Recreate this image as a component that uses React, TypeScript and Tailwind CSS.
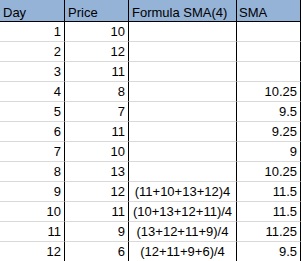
import React from 'react';

interface Row {
    day: number;
    price: number;
    formula?: string;
    sma?: string;
}

const ROWS: Row[] = [
    { day: 1, price: 10 },
    { day: 2, price: 12 },
    { day: 3, price: 11 },
    { day: 4, price: 8, sma: '10.25' },
    { day: 5, price: 7, sma: '9.5' },
    { day: 6, price: 11, sma: '9.25' },
    { day: 7, price: 10, sma: '9' },
    { day: 8, price: 13, sma: '10.25' },
    { day: 9, price: 12, formula: '(11+10+13+12)4', sma: '11.5' },
    { day: 10, price: 11, formula: '(10+13+12+11)/4', sma: '11.5' },
    { day: 11, price: 9, formula: '(13+12+11+9)/4', sma: '11.25' },
    { day: 12, price: 6, formula: '(12+11+9+6)/4', sma: '9.5' },
];

const GRID = 'grid grid-cols-[65px_64px_108px_64px]';

const App: React.FC = () => {
    return (
        <div className="w-[302px] h-[261px] overflow-hidden bg-white text-black text-[13px] font-['Liberation_Sans',Arial,sans-serif]">
            <div className={`${GRID} h-[22px] bg-[#95b3d7] border-b border-black leading-[17px] w-[301px]`}>
                <div className="pt-[4px] px-[3px] border-r border-black">Day</div>
                <div className="pt-[4px] px-[3px] border-r border-black">Price</div>
                <div className="pt-[4px] px-[3px] border-r border-black whitespace-nowrap">Formula SMA(4)</div>
                <div className="pt-[4px] px-[2px] border-r border-black">SMA</div>
            </div>
            {ROWS.map(r => (
                <div key={r.day} className={`${GRID} h-[20px] leading-[19px]`}>
                    <div className="px-[3px] text-right border-r border-b border-r-black border-b-[#d9d9d9]">{r.day}</div>
                    <div className="px-[3px] text-right border-r border-b border-r-black border-b-[#d9d9d9]">{r.price}</div>
                    <div className="text-center whitespace-nowrap border-r border-b border-r-black border-b-[#d9d9d9]">{r.formula}</div>
                    <div className="px-[3px] text-right border-r border-b border-r-black border-b-[#d9d9d9]">{r.sma}</div>
                </div>
            ))}
        </div>
    );
};

export default App;
